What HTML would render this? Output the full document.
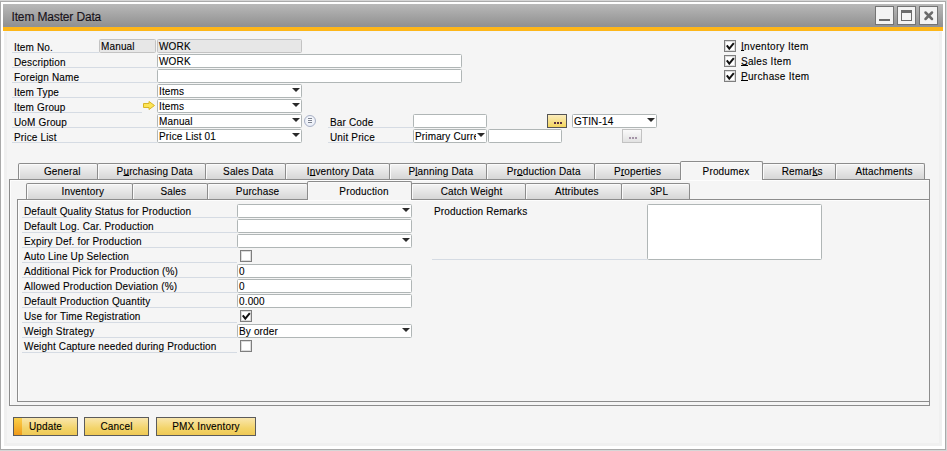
<!DOCTYPE html>
<html><head><meta charset="utf-8">
<style>
*{box-sizing:border-box;margin:0;padding:0}
html,body{width:947px;height:451px;overflow:hidden;background:#d6d6d6}
body{position:relative;font-family:"Liberation Sans",sans-serif;font-size:11px;color:#000;-webkit-text-stroke:0.1px #000}
.a{position:absolute}
#win{left:0;top:1px;width:946px;height:449px;border:1px solid #aaaaaa;background:#fff}
#content{left:4px;top:31px;width:938px;height:415px;background:#f0f0f0;border-top:1px solid #f1f4f9}
#inner{left:7px;top:32px;width:932px;height:411px;background:#f5f5f5}
#title{left:3px;top:4px;width:940px;height:23px;background:linear-gradient(#b9b9b9,#8f8f8f);}
#title .t{left:8.5px;top:6px;font-size:12px;color:#1b1420;letter-spacing:-0.15px}
#tline{left:3px;top:26px;width:940px;height:1px;background:#8d929a}
#orange{left:3px;top:27px;width:940px;height:4px;background:#fdb619}
.wb{width:19px;height:19px;border:1px solid #747474;background:#f3f3f3;top:6px}
.lbl{position:absolute;height:15px;border-bottom:1px solid #d5dbe3;white-space:nowrap;letter-spacing:0.15px;line-height:14px;font-size:10px}
.lbl span{position:absolute;left:2px;top:2px}
.hl span{top:3px}
.inp{position:absolute;height:14px;border:1px solid #b0b6b6;border-radius:1.5px;background:#fff;white-space:nowrap;overflow:hidden;line-height:14px;padding-left:1px;letter-spacing:0.15px;font-size:10px}
.ro{background:#e7e7e7;border-color:#c3c3c3}
.dd::before{content:"";position:absolute;right:0;top:0;width:10px;height:12px;background:#fff}
.dd::after{content:"";position:absolute;right:1px;top:3px;border-left:4px solid transparent;border-right:4px solid transparent;border-top:4px solid #2a2a2a}
.cb{position:absolute;width:12px;height:12px;border:1px solid #7e7e7e;background:#fff;box-shadow:inset 0 0 0 1px #dcdcdc}
.cb svg{position:absolute;left:0;top:0}
.tab{position:absolute;height:17px;border:1px solid #8c8c8c;border-bottom:none;border-radius:2px 2px 0 0;background:linear-gradient(#f4f4f4,#d6d6d6);box-shadow:inset 1px 1px 0 #fafafa;text-align:center;line-height:15px;letter-spacing:0.15px;white-space:nowrap;font-size:10px}
.tab.act{background:#f5f5f5;padding-top:2px}
.panel{position:absolute;border:1px solid #8c8c8c;background:#f5f5f5;box-shadow:inset 1px 1px 0 #fdfdfd}
.btn{position:absolute;top:417px;height:19px;border:1px solid #5b5b5b;background:linear-gradient(#f9e6ad,#f3d46a 60%,#efc955);text-align:center;line-height:18px;letter-spacing:0.15px;font-size:10px}
u{text-decoration:underline;text-decoration-thickness:1px;text-underline-offset:0px}
</style></head><body>
<div id="win" class="a"></div>
<div id="content" class="a"></div><div id="inner" class="a"></div>
<div id="title" class="a"><div class="t a">Item Master Data</div></div>
<div id="tline" class="a"></div>
<div id="orange" class="a"></div>
<div class="a wb" style="left:875px"><div class="a" style="left:3px;top:12px;width:11px;height:2px;background:#6b6b6b"></div></div>
<div class="a wb" style="left:897px"><div class="a" style="left:3px;top:3px;width:11px;height:11px;border:1px solid #6b6b6b;border-top-width:3px"></div></div>
<div class="a wb" style="left:919px"><svg class="a" style="left:0;top:0" width="17" height="17"><path d="M5.5 5.5L12 12M12 5.5L5.5 12" stroke="#6b6b6b" stroke-width="2.5" stroke-linecap="round"/></svg></div>

<!-- header labels -->
<div class="lbl hl" style="left:12px;top:38px;width:87px"><span>Item No.</span></div>
<div class="inp ro" style="left:99px;top:39px;width:57px">Manual</div>
<div class="inp ro" style="left:157px;top:39px;width:145px">WORK</div>
<div class="lbl hl" style="left:12px;top:53px;width:145px"><span>Description</span></div>
<div class="inp" style="left:157px;top:54px;width:305px">WORK</div>
<div class="lbl hl" style="left:12px;top:68px;width:145px"><span>Foreign Name</span></div>
<div class="inp" style="left:157px;top:69px;width:305px"></div>
<div class="lbl hl" style="left:12px;top:83px;width:145px"><span>Item Type</span></div>
<div class="inp dd" style="left:157px;top:84px;width:145px">Items</div>
<div class="lbl hl" style="left:12px;top:98px;width:130px"><span>Item Group</span></div>
<div class="inp dd" style="left:157px;top:99px;width:145px">Items</div>
<div class="lbl hl" style="left:12px;top:113px;width:145px"><span>UoM Group</span></div>
<div class="inp dd" style="left:157px;top:114px;width:145px">Manual</div>
<div class="lbl hl" style="left:12px;top:128px;width:145px"><span>Price List</span></div>
<div class="inp dd" style="left:157px;top:129px;width:145px">Price List 01</div>

<div class="lbl hl" style="left:328px;top:113px;width:85px"><span>Bar Code</span></div>
<div class="inp" style="left:413px;top:114px;width:74px"></div>
<div class="lbl hl" style="left:328px;top:128px;width:85px"><span>Unit Price</span></div>
<div class="inp dd" style="left:413px;top:129px;width:74px">Primary Currency</div>
<div class="inp" style="left:488px;top:129px;width:74px"></div>
<div class="inp dd" style="left:572px;top:114px;width:85px">GTIN-14</div>


<!-- arrow icon -->
<svg class="a" style="left:141px;top:99px" width="16" height="12"><path d="M2.5 4.5H8V2.5L13.5 6.5L8 10.5V8.5H2.5Z" fill="#fce455" stroke="#d8b526" stroke-width="1"/></svg>
<!-- round icon -->
<div class="a" style="left:304px;top:115px;width:12px;height:12px;border-radius:50%;border:1px solid #a9b1c6;background:radial-gradient(circle at 50% 40%,#ffffff,#dfe5f3)"></div>
<div class="a" style="left:308px;top:118px;width:4px;height:1px;background:#7d8391;box-shadow:0 2px 0 #7d8391,0 4px 0 #7d8391"></div>
<!-- ... buttons -->
<div class="a" style="left:547px;top:114px;width:20px;height:14px;border:1px solid #555;background:linear-gradient(#fbecbd,#f4d65e)"><div class="a" style="left:6px;top:7px;width:2px;height:2px;background:#5a3040;box-shadow:3px 0 0 #5a3040,6px 0 0 #5a3040"></div></div>
<div class="a" style="left:622px;top:129px;width:20px;height:14px;border:1px solid #c2c2c2;background:linear-gradient(#fafafa,#e2e2e2)"><div class="a" style="left:6px;top:7px;width:2px;height:2px;background:#a595a8;box-shadow:3px 0 0 #a595a8,6px 0 0 #a595a8"></div></div>
<!-- checkboxes -->
<div class="cb" style="left:724px;top:40px"><svg width="10" height="10"><path d="M1.8 4.3L4.3 7.6L8.8 2.2" fill="none" stroke="#111" stroke-width="2"/></svg></div>
<div class="cb" style="left:724px;top:55px"><svg width="10" height="10"><path d="M1.8 4.3L4.3 7.6L8.8 2.2" fill="none" stroke="#111" stroke-width="2"/></svg></div>
<div class="cb" style="left:724px;top:70px"><svg width="10" height="10"><path d="M1.8 4.3L4.3 7.6L8.8 2.2" fill="none" stroke="#111" stroke-width="2"/></svg></div>
<div class="a" style="left:741px;top:41px;letter-spacing:0.3px;font-size:10px"><u>I</u>nventory Item</div>
<div class="a" style="left:741px;top:56px;letter-spacing:0.3px;font-size:10px"><u>S</u>ales Item</div>
<div class="a" style="left:741px;top:71px;letter-spacing:0.3px;font-size:10px"><u>P</u>urchase Item</div>

<!-- outer panel -->
<div class="panel" style="left:9px;top:179px;width:921px;height:227px"></div>
<div class="tab" style="left:18px;top:163px;width:80px;height:16px;padding-left:8.4px">General</div>
<div class="tab" style="left:97px;top:163px;width:109px;height:16px;padding-left:6.4px">P<u>u</u>rchasing Data</div>
<div class="tab" style="left:205px;top:163px;width:81px;height:16px;padding-left:5.6px">Sales Data</div>
<div class="tab" style="left:285px;top:163px;width:105px;height:16px;padding-left:5.8px">I<u>n</u>ventory Data</div>
<div class="tab" style="left:389px;top:163px;width:98px;height:16px;padding-left:5.6px">P<u>l</u>anning Data</div>
<div class="tab" style="left:486px;top:163px;width:109px;height:16px;padding-left:6.4px">Pr<u>o</u>duction Data</div>
<div class="tab" style="left:594px;top:163px;width:87px;height:16px;padding-left:0.2px">P<u>r</u>operties</div>
<div class="tab act" style="left:680px;top:161px;width:83px;height:19px;padding-left:9px">Produmex</div>
<div class="tab" style="left:762px;top:163px;width:74px;height:16px;padding-left:6.4px">Remar<u>k</u>s</div>
<div class="tab" style="left:835px;top:163px;width:90px;height:16px;padding-left:8px">Attachments</div>
<div class="panel" style="left:17px;top:199px;width:913px;height:203px"></div>
<div class="tab" style="left:26px;top:183px;width:107px;height:16px;padding-left:6.6px">Inventory</div>
<div class="tab" style="left:132px;top:183px;width:76px;height:16px;padding-left:6.6px">Sales</div>
<div class="tab" style="left:207px;top:183px;width:101px;height:16px;padding-left:0.2px">Purchase</div>
<div class="tab act" style="left:307px;top:181px;width:105px;height:19px;padding-left:9px">Production</div>
<div class="tab" style="left:411px;top:183px;width:115px;height:16px;padding-left:6.0px">Catch Weight</div>
<div class="tab" style="left:525px;top:183px;width:97px;height:16px;padding-left:6.6px">Attributes</div>
<div class="tab" style="left:621px;top:183px;width:69px;height:16px;padding-left:7px">3PL</div>
<div class="lbl" style="left:22px;top:203px;width:215px"><span>Default Quality Status for Production</span></div>
<div class="inp dd" style="left:237px;top:204px;width:175px"></div>
<div class="lbl" style="left:22px;top:218px;width:215px"><span>Default Log. Car. Production</span></div>
<div class="inp" style="left:237px;top:219px;width:175px"></div>
<div class="lbl" style="left:22px;top:233px;width:215px"><span>Expiry Def. for Production</span></div>
<div class="inp dd" style="left:237px;top:234px;width:175px"></div>
<div class="lbl" style="left:22px;top:248px;width:215px"><span>Auto Line Up Selection</span></div>
<div class="cb" style="left:240px;top:250px"></div>
<div class="lbl" style="left:22px;top:263px;width:215px"><span>Additional Pick for Production (%)</span></div>
<div class="inp" style="left:237px;top:264px;width:175px">0</div>
<div class="lbl" style="left:22px;top:278px;width:215px"><span>Allowed Production Deviation (%)</span></div>
<div class="inp" style="left:237px;top:279px;width:175px">0</div>
<div class="lbl" style="left:22px;top:293px;width:215px"><span>Default Production Quantity</span></div>
<div class="inp" style="left:237px;top:294px;width:175px">0.000</div>
<div class="lbl" style="left:22px;top:308px;width:215px"><span>Use for Time Registration</span></div>
<div class="cb" style="left:240px;top:310px"><svg width="10" height="10"><path d="M1.8 4.3L4.3 7.6L8.8 2.2" fill="none" stroke="#111" stroke-width="2"/></svg></div>
<div class="lbl" style="left:22px;top:323px;width:215px"><span>Weigh Strategy</span></div>
<div class="inp dd" style="left:237px;top:324px;width:175px">By order</div>
<div class="lbl" style="left:22px;top:338px;width:215px"><span>Weight Capture needed during Production</span></div>
<div class="cb" style="left:240px;top:340px"></div>
<div class="lbl" style="left:432px;top:204px;width:215px;height:56px"><span style="top:1px">Production Remarks</span></div>
<div class="inp" style="left:647px;top:204px;width:175px;height:56px"></div>


<!-- buttons -->
<div class="btn" style="left:13px;width:65px"><div class="a" style="left:0;top:0;width:8px;height:17px;background:linear-gradient(#fbd14a,#f09a1a)"></div>Update</div>
<div class="btn" style="left:84px;width:65px">Cancel</div>
<div class="btn" style="left:156px;width:100px">PMX Inventory</div>
</body></html>
